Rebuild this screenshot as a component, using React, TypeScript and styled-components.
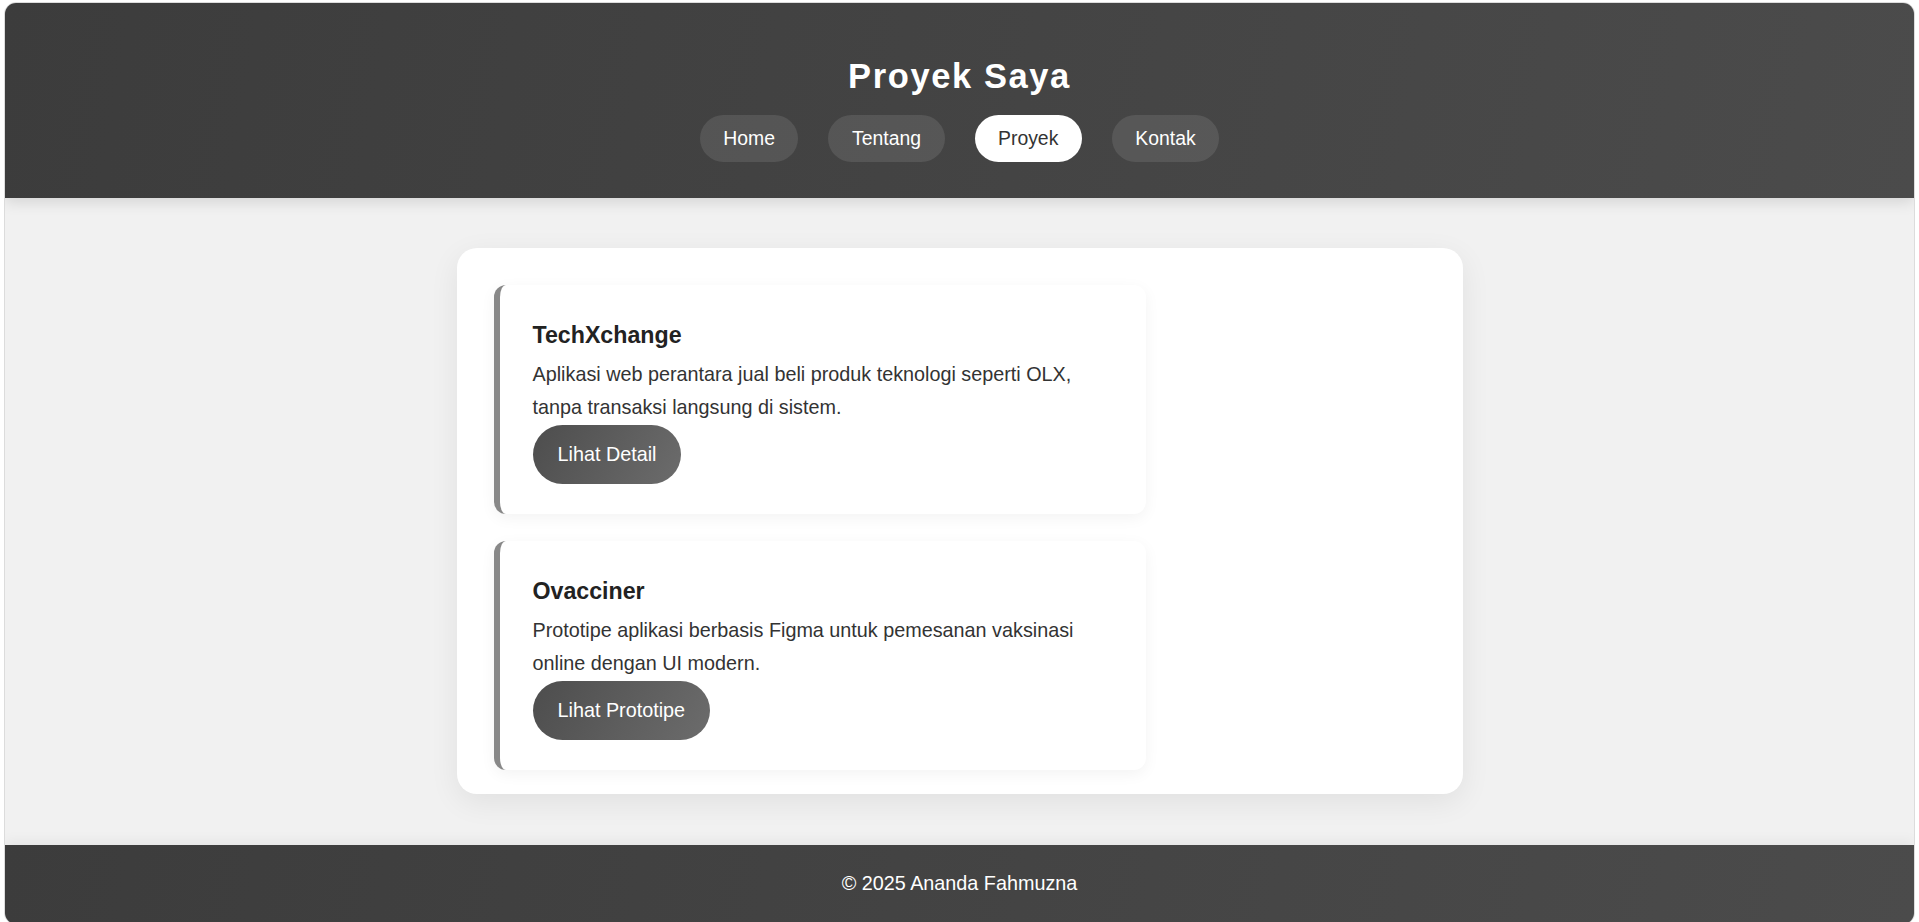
import React from "react";
import styled, { createGlobalStyle } from "styled-components";

const GlobalStyle = createGlobalStyle`
  html, body {
    margin: 0;
    padding: 0;
    background: #ffffff;
    overflow: hidden;
  }
  body {
    font-family: "Liberation Sans", Arial, Helvetica, sans-serif;
    color: #333;
  }
  * { box-sizing: border-box; }
`;

const Page = styled.div`
  margin: 2px 4px 0;
  border: 1px solid #dcdcdc;
  border-radius: 12px;
  overflow: hidden;
  background: #f1f1f1;
  display: flex;
  flex-direction: column;
`;

const Header = styled.header`
  position: relative;
  z-index: 1;
  background: linear-gradient(100deg, #3c3c3c 0%, #4b4b4b 100%);
  padding: 35px 0 36px;
  display: flex;
  flex-direction: column;
  align-items: center;
  box-shadow: 0 4px 14px rgba(0, 0, 0, 0.12);
`;

const Title = styled.h1`
  margin: 18px 0 19px;
  font-size: 34.5px;
  line-height: 40px;
  font-weight: 700;
  letter-spacing: 1.6px;
  color: #ffffff;
`;

const Nav = styled.nav`
  display: flex;
  gap: 30px;
`;

const NavLink = styled.a<{ $active?: boolean }>`
  display: block;
  padding: 12px 23.5px;
  font-size: 19.4px;
  line-height: 23px;
  border-radius: 30px;
  text-decoration: none;
  cursor: pointer;
  background: ${(p) => (p.$active ? "#ffffff" : "rgba(255, 255, 255, 0.1)")};
  color: ${(p) => (p.$active ? "#333333" : "#ffffff")};
`;

const Main = styled.main`
  padding: 50px 0 51px;
  display: flex;
  justify-content: center;
`;

const Panel = styled.section`
  width: 1006px;
  background: #ffffff;
  border-radius: 20px;
  padding: 37px 37px 24px;
  box-shadow: 0 8px 30px rgba(0, 0, 0, 0.07);
  display: flex;
  flex-direction: column;
  gap: 27px;
`;

const Card = styled.article`
  width: 652px;
  background: #ffffff;
  border-left: 6px solid #888888;
  border-radius: 12px;
  padding: 37px 33px 30px;
  box-shadow: 0 4px 15px rgba(0, 0, 0, 0.05);
`;

const CardTitle = styled.h3`
  margin: 0 0 10px;
  font-size: 23.2px;
  line-height: 26px;
  font-weight: 700;
  color: #222;
`;

const CardText = styled.p`
  margin: 0;
  font-size: 19.8px;
  line-height: 33.4px;
  color: #333;
`;

const Button = styled.a`
  display: inline-block;
  padding: 13px 25px;
  font-size: 19.8px;
  line-height: 33px;
  color: #ffffff;
  text-decoration: none;
  border-radius: 30px;
  background: linear-gradient(120deg, #4d4d4d 0%, #6c6c6c 100%);
  cursor: pointer;
`;

const Footer = styled.footer`
  position: relative;
  background: linear-gradient(100deg, #3c3c3c 0%, #4b4b4b 100%);
  color: #ffffff;
  text-align: center;
  padding: 27px 0 30px;
  font-size: 19.8px;
  line-height: 22px;
  box-shadow: 0 -4px 12px rgba(0, 0, 0, 0.05);
`;

const projects = [
  {
    title: "TechXchange",
    text: "Aplikasi web perantara jual beli produk teknologi seperti OLX, tanpa transaksi langsung di sistem.",
    action: "Lihat Detail",
  },
  {
    title: "Ovacciner",
    text: "Prototipe aplikasi berbasis Figma untuk pemesanan vaksinasi online dengan UI modern.",
    action: "Lihat Prototipe",
  },
];

const links = ["Home", "Tentang", "Proyek", "Kontak"];

export default function App() {
  return (
    <>
      <GlobalStyle />
      <Page>
        <Header>
          <Title>Proyek Saya</Title>
          <Nav>
            {links.map((l) => (
              <NavLink key={l} $active={l === "Proyek"}>
                {l}
              </NavLink>
            ))}
          </Nav>
        </Header>
        <Main>
          <Panel>
            {projects.map((p) => (
              <Card key={p.title}>
                <CardTitle>{p.title}</CardTitle>
                <CardText>{p.text}</CardText>
                <Button>{p.action}</Button>
              </Card>
            ))}
          </Panel>
        </Main>
        <Footer>© 2025 Ananda Fahmuzna</Footer>
      </Page>
    </>
  );
}
